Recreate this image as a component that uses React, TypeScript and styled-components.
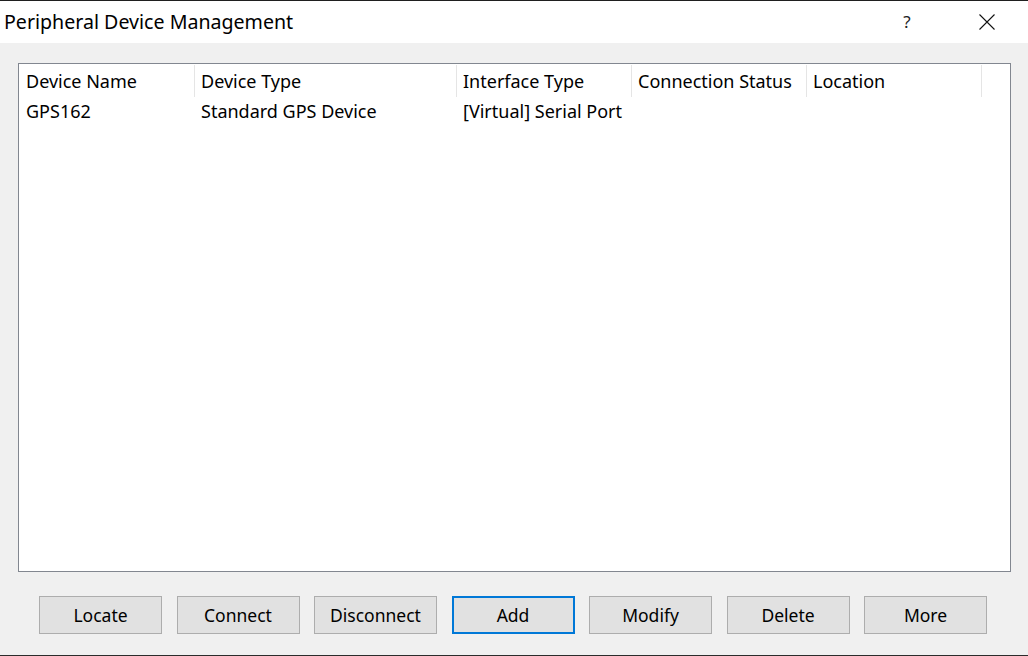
import styled, { createGlobalStyle } from "styled-components";

const Global = createGlobalStyle`
  html, body {
    margin: 0;
    padding: 0;
    background: #2b2b2b;
  }
  body {
    font-family: "Noto Sans", "Liberation Sans", sans-serif;
    color: #000;
  }
`

const Janela = styled.div`
  width: 1028px;
  height: 656px;
  box-sizing: border-box;
  border-top: 1px solid #1f1f1f;
  border-bottom: 1px solid #2b2b2b;
  display: flex;
  flex-direction: column;
  background: #f0f0f0;
`

const BarraTitulo = styled.div`
  height: 42px;
  background: #ffffff;
  display: flex;
  align-items: center;
  padding-left: 4px;
`

const Titulo = styled.span`
  flex: 1;
  font-size: 19.6px;
  padding-bottom: 1px;
`

const BotaoAjuda = styled.span`
  width: 46px;
  text-align: center;
  font-size: 17px;
  color: #222;
  margin-right: 34px;
  padding-bottom: 2px;
`

const BotaoFechar = styled.span`
  width: 46px;
  height: 42px;
  display: flex;
  align-items: center;
  justify-content: center;
  margin-right: 18px;
`

const Corpo = styled.div`
  flex: 1;
  display: flex;
  flex-direction: column;
  padding: 20px 17px 0 18px;
`

const Lista = styled.div`
  height: 509px;
  box-sizing: border-box;
  background: #ffffff;
  border: 1px solid #828790;
`

const Linha = styled.div<{ $cabecalho?: boolean }>`
  display: grid;
  grid-template-columns: 176px 262px 175px 175px 175px;
  height: ${p => (p.$cabecalho ? "32px" : "29px")};
  align-items: center;
`

const Celula = styled.div<{ $cabecalho?: boolean }>`
  height: 100%;
  display: flex;
  align-items: center;
  padding-left: 6px;
  font-size: 18px;
  white-space: nowrap;
  overflow: hidden;
  box-sizing: border-box;
  border-right: ${p => (p.$cabecalho ? "1px solid #e5e5e5" : "none")};
  margin: ${p => (p.$cabecalho ? "1px 0 0" : "0")};

  &:first-child {
    padding-left: 7px;
  }
`

const Rodape = styled.div`
  display: flex;
  gap: 14.5px;
  padding: 24px 0 0 21px;
`

const Botao = styled.button<{ $foco?: boolean }>`
  width: 123px;
  height: 38px;
  box-sizing: border-box;
  background: #e1e1e1;
  border: ${p => (p.$foco ? "2px solid #0078d7" : "1px solid #adadad")};
  font-family: "Noto Sans", "Liberation Sans", sans-serif;
  font-size: 17.5px;
  color: #000;
  padding: 0 0 1px;
`

const colunas = ["Device Name", "Device Type", "Interface Type", "Connection Status", "Location"]
const dispositivos = [["GPS162", "Standard GPS Device", "[Virtual] Serial Port", "", ""]]
const botoes = ["Locate", "Connect", "Disconnect", "Add", "Modify", "Delete", "More"]

const App: React.FC = () => {
  return (
    <>
      <Global />
      <Janela>
        <BarraTitulo>
          <Titulo>Peripheral Device Management</Titulo>
          <BotaoAjuda>?</BotaoAjuda>
          <BotaoFechar>
            <svg width="16" height="16" viewBox="0 0 16 16">
              <path d="M0.5 0.5 L15.5 15.5 M15.5 0.5 L0.5 15.5" stroke="#111" strokeWidth="1.1" fill="none" />
            </svg>
          </BotaoFechar>
        </BarraTitulo>
        <Corpo>
          <Lista>
            <Linha $cabecalho>
              {colunas.map(c => (
                <Celula $cabecalho key={c}>{c}</Celula>
              ))}
            </Linha>
            {dispositivos.map((d, i) => (
              <Linha key={i}>
                {d.map((v, j) => (
                  <Celula key={j}>{v}</Celula>
                ))}
              </Linha>
            ))}
          </Lista>
          <Rodape>
            {botoes.map(b => (
              <Botao key={b} $foco={b === "Add"}>{b}</Botao>
            ))}
          </Rodape>
        </Corpo>
      </Janela>
    </>
  )
}

export default App
